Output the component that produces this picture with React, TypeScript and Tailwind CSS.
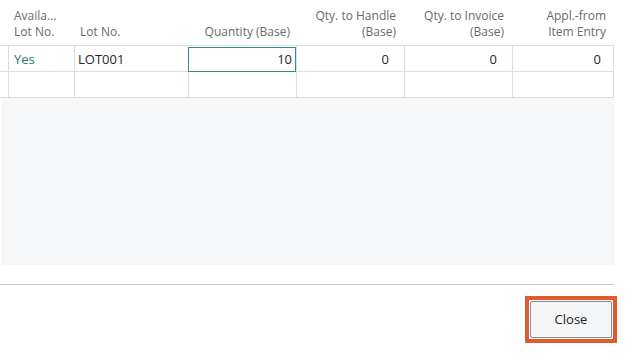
import React from "react";

const font = { fontFamily: '"Open Sans", "Noto Sans", sans-serif' };

export default function App() {
  return (
    <div className="w-[640px] h-[360px] bg-white overflow-hidden relative" style={font}>
      <div className="w-[614px]">
        {/* header */}
        <div className="grid grid-cols-[8px_66px_114px_108px_108px_108px_102px] h-[46px] border-b border-[#dcdcdc] text-[12px] leading-[16px] text-[#6a6a6a]">
          <div />
          <div className="flex flex-col justify-end pb-[5px] pl-[6px]">
            <span>Availa...</span>
            <span>Lot No.</span>
          </div>
          <div className="flex flex-col justify-end pb-[5px] pl-[6px]">
            <span>Lot No.</span>
          </div>
          <div className="flex flex-col justify-end items-end pb-[5px] pr-[6px]">
            <span>Quantity (Base)</span>
          </div>
          <div className="flex flex-col justify-end items-end pb-[5px] pr-[8px]">
            <span>Qty. to Handle</span>
            <span>(Base)</span>
          </div>
          <div className="flex flex-col justify-end items-end pb-[5px] pr-[8px]">
            <span>Qty. to Invoice</span>
            <span>(Base)</span>
          </div>
          <div className="flex flex-col justify-end items-end pb-[5px] pr-[8px]">
            <span>Appl.-from</span>
            <span>Item Entry</span>
          </div>
        </div>
        {/* row 1 */}
        <div className="grid grid-cols-[8px_66px_114px_108px_108px_108px_102px] h-[26px] border-b border-[#dcdcdc] text-[13px] text-[#262626]">
          <div />
          <div className="border-l border-[#dcdcdc] flex items-center pt-[2px] pl-[5px] text-[#1f7a72]">Yes</div>
          <div className="border-l border-[#dcdcdc] flex items-center pt-[2px] pl-[3px]">LOT001</div>
          <div className="border border-[#2f8f8a] flex items-center justify-end pt-[1px] pr-[3px] -mb-px mt-px">10</div>
          <div className="border-l border-[#dcdcdc] flex items-center justify-end pt-[2px] pr-[15px]">0</div>
          <div className="border-l border-[#dcdcdc] flex items-center justify-end pt-[2px] pr-[15px]">0</div>
          <div className="border-l border-r border-[#dcdcdc] flex items-center justify-end pt-[2px] pr-[12px]">0</div>
        </div>
        {/* row 2 */}
        <div className="grid grid-cols-[8px_66px_114px_108px_108px_108px_102px] h-[26px] border-b border-[#dcdcdc]">
          <div />
          <div className="border-l border-[#dcdcdc]" />
          <div className="border-l border-[#dcdcdc]" />
          <div className="border-l border-[#dcdcdc]" />
          <div className="border-l border-[#dcdcdc]" />
          <div className="border-l border-[#dcdcdc]" />
          <div className="border-l border-r border-[#dcdcdc]" />
        </div>
        {/* gray empty area */}
        <div className="ml-[2px] h-[167px] bg-[#f6f7f9]" />
        <div className="h-[19px]" />
        <div className="border-t border-[#c6c6c6]" />
      </div>
      {/* footer */}
      <div className="flex justify-end pr-[23px] pt-[11px]">
        <div className="border-[4px] border-[#e2592b] p-px">
          <button className="w-[82px] h-[37px] bg-[#f4f5f7] border border-[#8c8c8c] rounded-[2px] text-[13px] text-[#212121]">
            Close
          </button>
        </div>
      </div>
    </div>
  );
}
